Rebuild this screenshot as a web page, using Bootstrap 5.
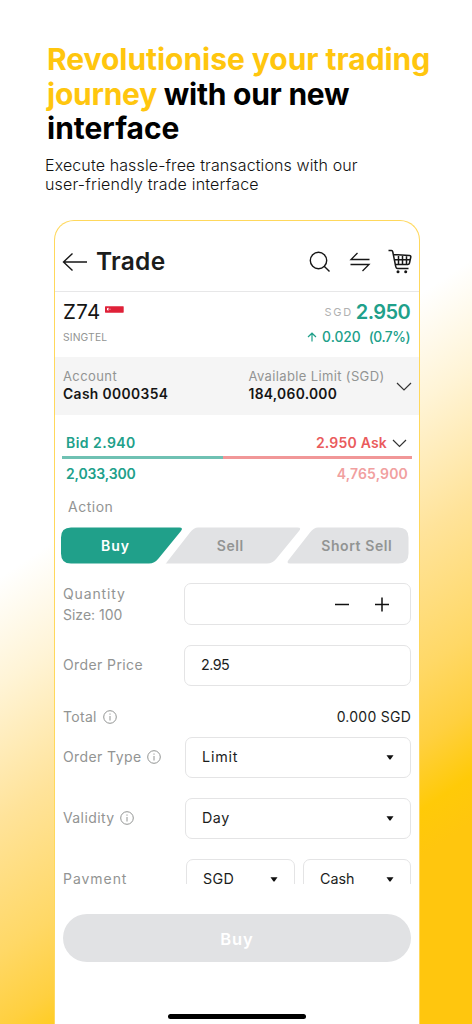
<!DOCTYPE html>
<html lang="en">
<head>
<meta charset="utf-8">
<meta name="viewport" content="width=device-width, initial-scale=1">
<title>Trade</title>
<link href="https://cdn.jsdelivr.net/npm/bootstrap@5.3.0/dist/css/bootstrap.min.css" rel="stylesheet">
<style>
body{width:472px;height:1024px;overflow:hidden;font-family:Inter,"Liberation Sans",sans-serif;font-size:14px;line-height:20px;color:#1b1d1c;
background:linear-gradient(146deg,#fff 43%,#fff4d6 51%,#ffe39a 61%,#ffd866 71%,#ffd040 76.5%,#ffca08 81.5%,#ffc60e 85%)}
svg{display:block;flex:none}
.promo{height:220px;padding:42px 0 0 47px}
.promo h1{font-size:30px;line-height:34.7px;font-weight:700;color:#000;margin:0;white-space:nowrap}
.promo h1 span{display:block}
.promo .gold{color:#ffc60e;display:inline}
.l1{letter-spacing:-.04px}.l2{letter-spacing:-.25px}.l3{letter-spacing:0}
.promo p{font-size:16px;line-height:18.5px;font-weight:300;color:#111;margin:10px 0 0 -2px}
.phone{width:366px;height:804px;margin-left:54px;background:#fff;border:1px solid #ffd85c;border-bottom:0;border-radius:20px 20px 0 0}
.topbar{height:71px;padding:11px 7px 0 7px;border-bottom:1px solid #e7e7e8}
.topbar h2{font-size:24.5px;font-weight:600;margin:-1px 0 0 8px;letter-spacing:.25px;line-height:30px}
.quote{height:65px;padding:7px 9px 0 8px}
.tick{font-size:20.5px;line-height:26px;color:#151515;letter-spacing:.3px}
.muted{color:#929493}
.teal{color:#20a08a}
.price{font-size:20px;font-weight:600;line-height:26px;letter-spacing:-.6px}
.change{font-size:13.8px;font-weight:500}
.acct{height:58px;background:#f5f5f5;padding:10px 7px 0 8px;line-height:18px;font-size:13px}
.acct .val{font-size:13.8px;font-weight:600;color:#151515}
.depth{padding:15px 7px 0}
.depth .line1{height:26px;padding:0 5px 0 4px;font-weight:600}
.depth .bar{height:3px}
.depth .line2{height:30px;padding:0 4px 0 4px;font-weight:600}
.ask{color:#ea5b5c}.askvol{color:#f1a09f}
.action{height:38px;padding:8px 0 0 13px}
.seg{height:37px;margin:0 0 0 6px}
.form-area{height:301px;overflow:hidden;padding:0 8px;margin-top:19px}
.f-row{height:42px}
.lab{width:121px;flex:none;letter-spacing:.4px}
.box{border:1px solid #e4e4e5;border-radius:7px;height:42px;background:#fff;font-size:14.3px}
.box.sel{margin-left:1px;height:41px}
.buy{height:48px;margin:30px 8px 0 8px;padding:2px 0 0;border:0;border-radius:24px;background:#e1e2e4;color:#fff;font-weight:600;font-size:16.5px;letter-spacing:.9px}
.homebar{width:138px;height:5px;border-radius:3px;background:#000;margin:52px 0 0 113px}
</style>
</head>
<body>
<header class="promo">
  <h1><span class="l1"><span class="gold">Revolutionise your trading</span></span><span class="l2"><span class="gold">journey</span> with our new</span><span class="l3">interface</span></h1>
  <p><span style="letter-spacing:.12px">Execute hassle-free transactions with our</span><br><span style="letter-spacing:.2px">user-friendly trade interface</span></p>
</header>
<main class="phone">
  <div class="topbar d-flex align-items-center">
    <svg width="26" height="22" viewBox="0 0 26 22" fill="none" stroke="#161616" stroke-width="1.4"><path d="M25 11H2M10.500 2.500 1.500 11l9 8.500"/></svg>
    <h2>Trade</h2>
    <div class="d-flex align-items-center ms-auto">
      <svg width="22" height="22" viewBox="0 0 22 22" fill="none" stroke="#161616" stroke-width="1.400"><circle cx="9.500" cy="9.500" r="8.200"/><path d="m15.200 15.200 5.300 5.300"/></svg>
      <svg style="margin-left:18px" width="22" height="20" viewBox="0 0 22 20" fill="none" stroke="#161616" stroke-width="1.300"><path d="M20.500 7.500H2L8.500 1M1.500 12.500H20L13.500 19"/></svg>
      <svg style="margin-left:17px" width="24" height="25" viewBox="0 0 24 25" fill="none" stroke="#161616" stroke-width="1.500" stroke-linejoin="round"><path d="M.5 1.500H3.500Q4.500 1.500 4.800 3L7.500 16.500Q7.900 19.500 9.500 19.500H20.500M5.500 5.500 21.500 6.500Q23 6.700 22.800 8L21.500 14Q21.200 15.500 19.800 15.500H7.500M6.300 10.800H22M10.500 6V15.500M14.500 6V15.500M18.500 6.500V15.500"/><circle cx="10" cy="22.800" r="1.500" fill="#161616" stroke="none"/><circle cx="17.700" cy="22.800" r="1.500" fill="#161616" stroke="none"/></svg>
    </div>
  </div>
  <section class="quote">
    <div class="d-flex align-items-center">
      <span class="tick">Z74</span>
      <svg style="margin:-5px 0 0 5px" width="19" height="7" viewBox="0 0 19 7"><rect y=".2" width="18.700" height="6.500" rx=".6" fill="#df2138"/><path d="M3.800 2a1.300 1.300 0 1 0 0 2.300 1.700 1.700 0 0 1 0-2.300z" fill="#fff"/><circle cx="5" cy="3.200" r=".6" fill="#f5a9b2"/></svg>
      <span class="ms-auto" style="font-size:11px;letter-spacing:1.700px;color:#b0b1b1">SGD</span>
      <span class="price teal" style="margin-left:3px">2.950</span>
    </div>
    <div class="d-flex align-items-center" style="height:24px">
      <span class="muted" style="font-size:10.300px;letter-spacing:.150px">SINGTEL</span>
      <svg class="ms-auto" width="10" height="10" viewBox="0 0 10 10" fill="none" stroke="#20a08a" stroke-width="1.200"><path d="M5 9.500V1.500M1 5l4-3.800L9 5"/></svg>
      <span class="teal change" style="margin-left:5px">0.020</span><span class="teal change" style="margin-left:8px;letter-spacing:-.5px">(0.7%)</span>
    </div>
  </section>
  <section class="acct d-flex">
    <div style="width:185.500px"><div class="muted" style="letter-spacing:.4px">Account</div><div class="val" style="letter-spacing:.4px">Cash 0000354</div></div>
    <div><div class="muted" style="letter-spacing:.36px">Available Limit (SGD)</div><div class="val" style="letter-spacing:.3px">184,060.000</div></div>
    <svg class="ms-auto" style="margin-top:15px" width="16" height="9" viewBox="0 0 16 9" fill="none" stroke="#333" stroke-width="1.200"><path d="m1 1 7 7 7-7"/></svg>
  </section>
  <section class="depth">
    <div class="line1 d-flex align-items-center"><span class="teal" style="letter-spacing:.45px">Bid 2.940</span><span class="ask ms-auto" style="letter-spacing:.2px">2.950 Ask</span><svg style="margin-left:5px" width="15" height="9" viewBox="0 0 15 9" fill="none" stroke="#333" stroke-width="1.200"><path d="m1 1 6.500 6.500L14 1"/></svg></div>
    <div class="bar d-flex"><div style="width:46%;background:#6fc1b3"></div><div class="flex-fill" style="background:#f19798"></div></div>
    <div class="line2 d-flex align-items-center justify-content-between"><span class="teal" style="letter-spacing:-.15px">2,033,300</span><span class="askvol" style="letter-spacing:.150px">4,765,900</span></div>
  </section>
  <div class="action muted" style="letter-spacing:.5px">Action</div>
  <svg class="seg" width="348" height="37" viewBox="0 0 348 37" font-family="Inter" font-size="14" font-weight="600" text-anchor="middle">
    <path fill="#20a08a" d="M10 .5H118.500Q122.500.500 120 4L97.500 31.500Q93.500 36.500 88 36.500H10Q0 36.500 0 26.500V10.500Q0 .5 10 .5z"/>
    <path fill="#e1e2e4" d="M137 .5H236.500Q241 .5 238 4L215.500 31.500Q211.500 36.500 206 36.500H104.500Q105 36.500 107.500 33L129 5.500Q133 .5 137 .5zM257 .5H337.500Q347.500.500 347.500 10.500V26.500Q347.500 36.500 337.500 36.500H229Q225 36.500 227.500 33L249 5.500Q253 .5 257 .5z"/>
    <text x="54.500" y="23.500" fill="#fff" letter-spacing="1">Buy</text><text x="169.200" y="23.500" fill="#929493" letter-spacing=".5">Sell</text><text x="295.800" y="23.500" fill="#929493" letter-spacing=".6">Short Sell</text>
  </svg>
  <section class="form-area">
    <div class="f-row d-flex align-items-center">
      <div class="lab muted" style="line-height:21px"><span style="letter-spacing:.85px">Quantity</span><br><span style="letter-spacing:0">Size: 100</span></div>
      <div class="box flex-fill d-flex align-items-center justify-content-end" style="padding-right:20px"><svg width="56" height="16" viewBox="0 0 56 16" stroke="#111" stroke-width="1.500"><path d="M1 8.500H15M41 8.500H55M48 1.500V15.500"/></svg></div>
    </div>
    <div class="f-row d-flex align-items-center" style="margin-top:19.500px;height:41px">
      <div class="lab muted">Order Price</div>
      <div class="box flex-fill d-flex align-items-center px-3" style="height:41px;letter-spacing:-.5px">2.95</div>
    </div>
    <div class="d-flex align-items-center" style="height:34px;margin:14px 0 3px">
      <span class="muted" style="letter-spacing:.3px">Total</span>
      <svg style="margin-left:6px" width="14" height="14" viewBox="0 0 14 14" fill="none" stroke="#929493"><circle cx="7" cy="7" r="6.300"/><path d="M7 6V10.500M7 3.500V4.700"/></svg>
      <span class="ms-auto" style="letter-spacing:.25px">0.000 SGD</span>
    </div>
    <div class="f-row d-flex">
      <div class="lab muted d-flex align-items-center" style="height:41px">Order Type<svg style="margin-left:6px" width="14" height="14" viewBox="0 0 14 14" fill="none" stroke="#929493"><circle cx="7" cy="7" r="6.300"/><path d="M7 6V10.500M7 3.500V4.700"/></svg></div>
      <div class="box sel flex-fill d-flex align-items-center px-3"><span style="letter-spacing:.8px">Limit</span><svg class="ms-auto" width="8" height="5" viewBox="0 0 8 5"><path d="M.5.300H7.500L4.500 4.500H3.500z" fill="#111"/></svg></div>
    </div>
    <div class="f-row d-flex" style="margin-top:19px">
      <div class="lab muted d-flex align-items-center" style="height:41px">Validity<svg style="margin-left:6px" width="14" height="14" viewBox="0 0 14 14" fill="none" stroke="#929493"><circle cx="7" cy="7" r="6.300"/><path d="M7 6V10.500M7 3.500V4.700"/></svg></div>
      <div class="box sel flex-fill d-flex align-items-center px-3"><span style="letter-spacing:.5px">Day</span><svg class="ms-auto" width="8" height="5" viewBox="0 0 8 5"><path d="M.5.300H7.500L4.500 4.500H3.500z" fill="#111"/></svg></div>
    </div>
    <div class="f-row d-flex" style="margin-top:19px">
      <div class="lab muted d-flex align-items-center" style="height:41px;letter-spacing:.95px">Payment</div>
      <div class="box sel d-flex align-items-center px-3" style="width:109px;margin-left:2px"><span style="letter-spacing:.3px">SGD</span><svg class="ms-auto" width="8" height="5" viewBox="0 0 8 5"><path d="M.5.300H7.500L4.500 4.500H3.500z" fill="#111"/></svg></div>
      <div class="box sel flex-fill d-flex align-items-center px-3" style="margin-left:8px">Cash<svg class="ms-auto" width="8" height="5" viewBox="0 0 8 5"><path d="M.5.300H7.500L4.500 4.500H3.500z" fill="#111"/></svg></div>
    </div>
  </section>
  <div class="d-grid"><button class="buy" type="button">Buy</button></div>
  <div class="homebar"></div>
</main>
<script src="https://cdn.jsdelivr.net/npm/bootstrap@5.3.0/dist/js/bootstrap.bundle.min.js"></script>
</body>
</html>
